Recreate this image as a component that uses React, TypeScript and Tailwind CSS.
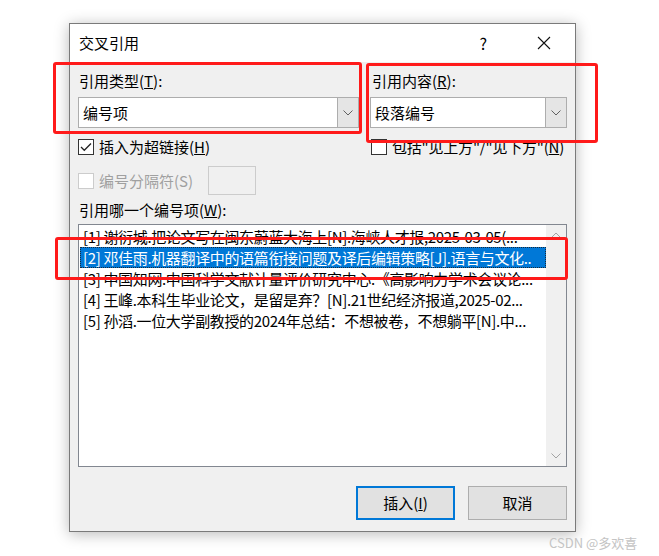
import React from "react";

const font = { fontFamily: '"Noto Sans CJK SC", "Noto Sans", sans-serif' };

function Chevron({ className }: { className?: string }) {
  return (
    <svg width="10" height="6" viewBox="0 0 10 6" className={className}>
      <path d="M0.5 0.5 L5 5 L9.5 0.5" fill="none" stroke="currentColor" strokeWidth="1" />
    </svg>
  );
}

function Select({ value, width }: { value: string; width: string }) {
  return (
    <div className={`flex h-[31px] ${width} border border-[#adadad] bg-white`}>
      <div className="flex flex-1 items-center pl-[4px] text-[15px] leading-none text-black">
        {value}
      </div>
      <div className="flex w-[21px] items-center justify-center border-l border-[#adadad] bg-[#e5e5e5] text-[#606060]">
        <Chevron />
      </div>
    </div>
  );
}

function Check({ checked, disabled }: { checked?: boolean; disabled?: boolean }) {
  return (
    <div
      className={`flex h-[16px] w-[16px] shrink-0 items-center justify-center border bg-white ${
        disabled ? "border-[#cccccc]" : "border-[#333333]"
      }`}
    >
      {checked && (
        <svg width="12" height="10" viewBox="0 0 12 10">
          <path d="M1 5 L4.3 8.3 L11 1.5" fill="none" stroke="#222" strokeWidth="1.3" />
        </svg>
      )}
    </div>
  );
}

const items = [
  "[1] 谢衍城.把论文写在闽东蔚蓝大海上[N].海峡人才报,2025-03-05(...",
  "[2] 邓佳雨.机器翻译中的语篇衔接问题及译后编辑策略[J].语言与文化..",
  "[3] 中国知网.中国科学文献计量评价研究中心.《高影响力学术会议论...",
  "[4] 王峰.本科生毕业论文，是留是弃？[N].21世纪经济报道,2025-02...",
  "[5] 孙滔.一位大学副教授的2024年总结：不想被卷，不想躺平[N].中...",
];

export default function App() {
  return (
    <div className="relative h-[556px] w-[659px] overflow-hidden bg-white" style={font}>
      <div className="ml-[69px] mt-[23px] flex h-[509px] w-[507px] flex-col overflow-hidden border border-[#7a7a7a] bg-[#f0f0f0] shadow-[0_2px_14px_rgba(0,0,0,0.28)]">
        {/* title bar */}
        <div className="flex h-[38px] shrink-0 items-center bg-white pl-[9px] text-[15px] leading-[18px] text-black">
          <span className="flex-1">交叉引用</span>
          <span className="mr-[50px] text-[16px]">?</span>
          <svg width="14" height="14" viewBox="0 0 14 14" className="mr-[24px]">
            <path d="M1 1 L13 13 M13 1 L1 13" stroke="#111" strokeWidth="1.1" />
          </svg>
        </div>

        {/* body */}
        <div className="flex flex-1 flex-col pl-[8px] pr-[8px] text-[15px] leading-[18px] text-black">
          <div className="mt-[10px] flex">
            <div className="flex w-[292px] flex-col">
              <span className="ml-[1px] h-[18px]">引用类型(<u>T</u>):</span>
              <div className="mt-[7px]">
                <Select value="编号项" width="w-[281px]" />
              </div>
            </div>
            <div className="flex flex-col">
              <span className="ml-[2px] h-[18px]">引用内容(<u>R</u>):</span>
              <div className="mt-[7px]">
                <Select value="段落编号" width="w-[197px]" />
              </div>
            </div>
          </div>

          <div className="mt-[10px] flex h-[18px] whitespace-nowrap">
            <div className="flex w-[293px] items-center gap-[5px]">
              <Check checked />
              <span>插入为超链接(<u>H</u>)</span>
            </div>
            <div className="flex items-center gap-[5px]">
              <Check />
              <span className="tracking-[-0.2px]">包括"见上方"/"见下方"(<u>N</u>)</span>
            </div>
          </div>

          <div className="mt-[10px] flex h-[29px] items-center">
            <Check disabled />
            <span className="ml-[5px] text-[#a0a0a0]">编号分隔符(S)</span>
            <div className="ml-[15px] h-[29px] w-[48px] border border-[#cccccc] bg-[#f0f0f0]" />
          </div>

          <span className="mt-[6px] ml-[1px] h-[18px]">引用哪一个编号项(<u>W</u>):</span>

          <div className="mt-[5px] flex h-[243px] w-[489px] shrink-0 border border-[#828790] bg-white">
            <div className="flex min-w-0 flex-1 flex-col pt-[1px] pl-[1px]">
              {items.map((t, i) => (
                <div
                  key={i}
                  className={`h-[21px] overflow-hidden whitespace-nowrap pl-[2px] leading-[19px] tracking-[-0.35px] ${
                    i === 1
                      ? "border border-dotted border-[#1a2a3a] bg-[#0078d7] text-white"
                      : "border border-transparent text-black"
                  }`}
                >
                  {t}
                </div>
              ))}
            </div>
            <div className="flex w-[20px] flex-col items-center justify-between bg-[#f0f0f0] py-[7px] text-[#a3a3a3]">
              <Chevron className="rotate-180" />
              <Chevron />
            </div>
          </div>

          <div className="mt-[19px] flex justify-end gap-[13px]">
            <div className="flex h-[34px] w-[99px] items-center justify-center border-2 border-[#0078d7] bg-[#e1e1e1]">
              插入(<u>I</u>)
            </div>
            <div className="flex h-[34px] w-[99px] items-center justify-center border border-[#adadad] bg-[#e1e1e1]">
              取消
            </div>
          </div>
        </div>
      </div>

      <div className="ml-[549px] mt-[4px] text-[13px] leading-[14px] text-[#c4c4c4]">CSDN @多欢喜</div>

      {/* red annotation boxes */}
      <div className="absolute left-[53px] top-[62px] h-[72px] w-[309px] rounded-[3px] border-[3px] border-[#ff1a1a]" />
      <div className="absolute left-[366px] top-[63px] h-[80px] w-[232px] rounded-[3px] border-[3px] border-[#ff1a1a]" />
      <div className="absolute left-[55px] top-[237px] h-[43px] w-[513px] rounded-[3px] border-[3px] border-[#ff1a1a]" />
    </div>
  );
}
